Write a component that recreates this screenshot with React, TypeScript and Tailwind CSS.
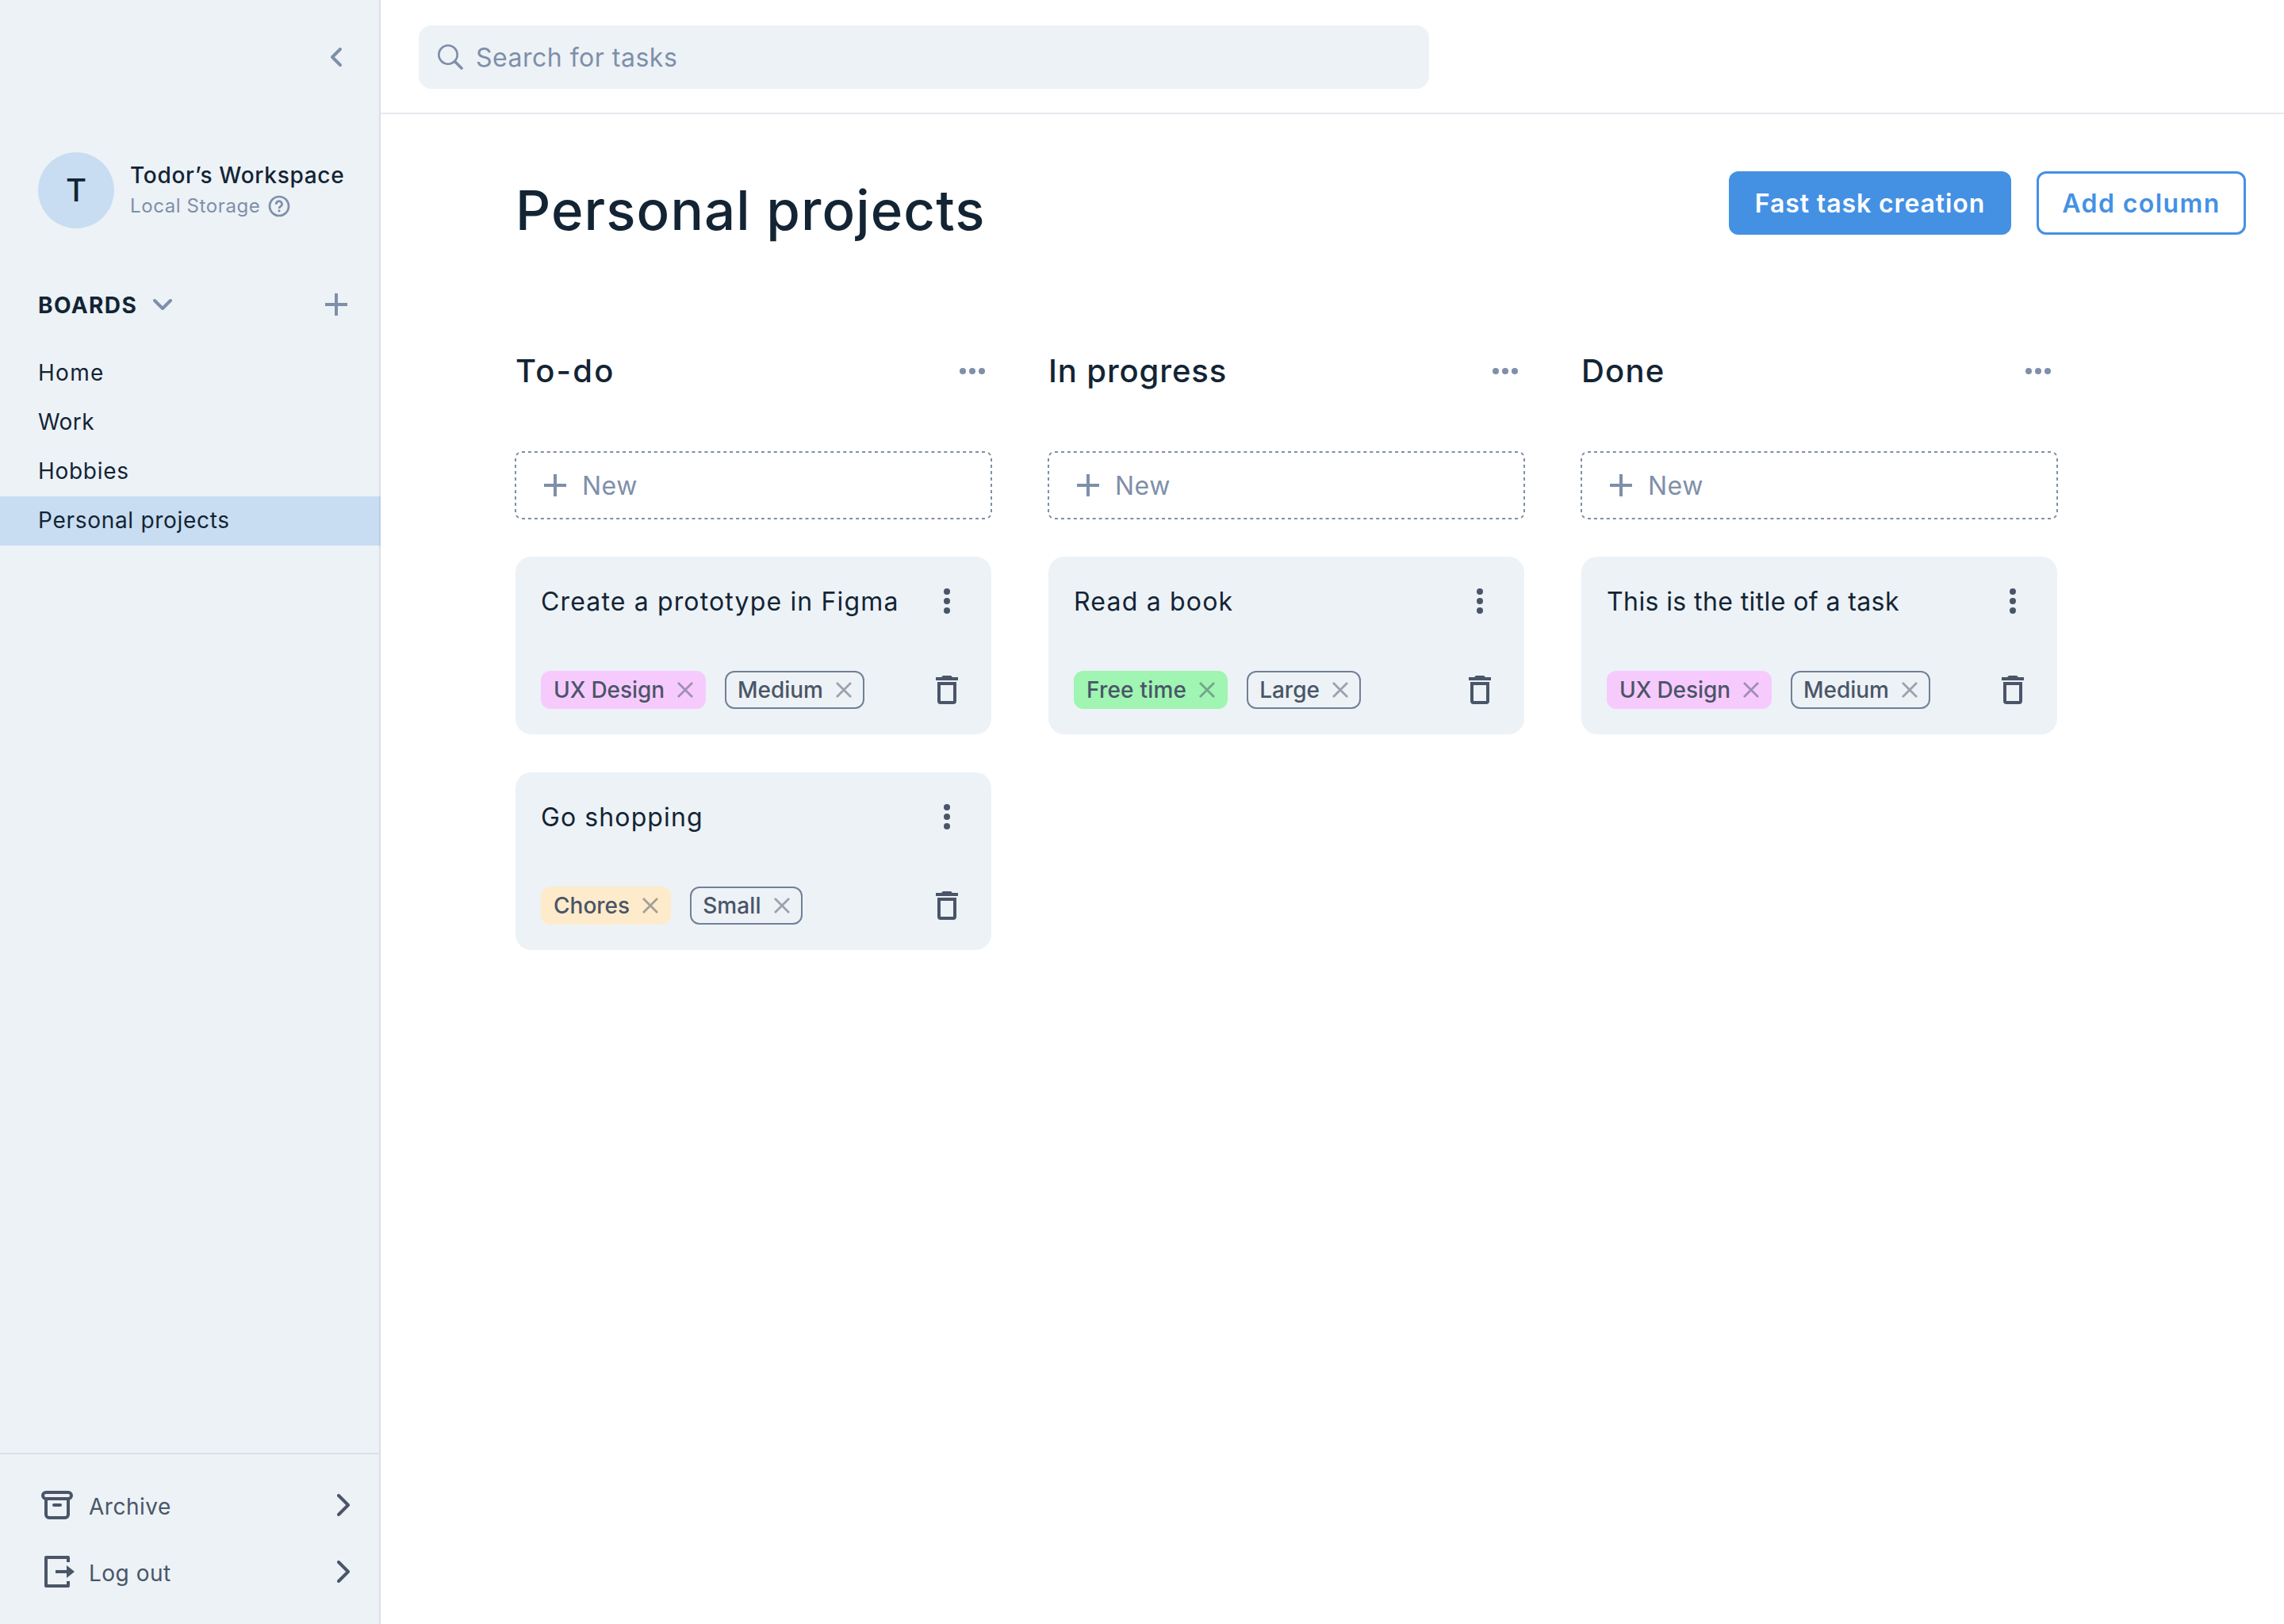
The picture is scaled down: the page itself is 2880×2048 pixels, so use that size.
import React, { useState } from 'react';

interface Tag {
  label: string;
  variant: 'pink' | 'green' | 'orange' | 'outline';
  tracking?: string;
}

interface Task {
  title: string;
  tracking: string;
  tags: Tag[];
}

interface Column {
  name: string;
  tracking: string;
  tasks: Task[];
}

const boards = [
  { name: 'Home', tracking: 'tracking-[1.3px]' },
  { name: 'Work', tracking: 'tracking-[0.4px]' },
  { name: 'Hobbies', tracking: 'tracking-[0.7px]' },
  { name: 'Personal projects', tracking: 'tracking-[0.7px]' },
];

const columns: Column[] = [
  {
    name: 'To-do',
    tracking: 'tracking-[2.2px]',
    tasks: [
      {
        title: 'Create a prototype in Figma',
        tracking: 'tracking-[1.15px]',
        tags: [
          { label: 'UX Design', variant: 'pink', tracking: 'tracking-[-0.1px]' },
          { label: 'Medium', variant: 'outline' },
        ],
      },
      {
        title: 'Go shopping',
        tracking: 'tracking-[1.1px]',
        tags: [
          { label: 'Chores', variant: 'orange' },
          { label: 'Small', variant: 'outline', tracking: 'tracking-[0.1px]' },
        ],
      },
    ],
  },
  {
    name: 'In progress',
    tracking: 'tracking-[0.9px]',
    tasks: [
      {
        title: 'Read a book',
        tracking: 'tracking-[1.2px]',
        tags: [
          { label: 'Free time', variant: 'green', tracking: 'tracking-[0.2px]' },
          { label: 'Large', variant: 'outline' },
        ],
      },
    ],
  },
  {
    name: 'Done',
    tracking: 'tracking-[1.2px]',
    tasks: [
      {
        title: 'This is the title of a task',
        tracking: 'tracking-[0.4px]',
        tags: [
          { label: 'UX Design', variant: 'pink', tracking: 'tracking-[-0.1px]' },
          { label: 'Medium', variant: 'outline' },
        ],
      },
    ],
  },
];

const tagStyles: Record<Tag['variant'], string> = {
  pink: 'border-[#f7cafe] bg-[#f7cafe]',
  green: 'border-[#9ff5b1] bg-[#9ff5b1]',
  orange: 'border-[#feebcb] bg-[#feebcb]',
  outline: 'border-[#718096]',
};

const PlusIcon = () => (
  <svg className="size-7" viewBox="0 0 28 28" fill="none" stroke="currentColor" strokeWidth="4" aria-hidden="true">
    <path d="M14 0v28M0 14h28" />
  </svg>
);

const ChevronRight = () => (
  <svg className="h-7 w-4" viewBox="0 0 16 28" fill="none" stroke="currentColor" strokeWidth="4" strokeLinecap="round" strokeLinejoin="round" aria-hidden="true">
    <path d="M2 2l12 12L2 26" />
  </svg>
);

const ArchiveIcon = () => (
  <svg className="h-9 w-10" viewBox="0 0 40 36" fill="none" stroke="currentColor" strokeWidth="4" strokeLinecap="round" strokeLinejoin="round" aria-hidden="true">
    <rect x="2" y="2" width="36" height="8" rx="4" />
    <path d="M6 10v20a4 4 0 0 0 4 4h20a4 4 0 0 0 4-4V10M16 18h8" />
  </svg>
);

const LogoutIcon = () => (
  <svg className="h-10 w-[38px]" viewBox="0 0 38 40" fill="none" stroke="currentColor" strokeWidth="4" strokeLinejoin="round" aria-hidden="true">
    <path d="M30 8V2H2v36h28v-6M14 20h15" />
    <path d="M28 12l10 8-10 8z" fill="currentColor" stroke="none" />
  </svg>
);

const TrashIcon = () => (
  <svg className="h-9 w-7" viewBox="0 0 28 36" fill="currentColor" aria-hidden="true">
    <path d="M9 0h10l2 2h7v4H0V2h7z" />
    <path fillRule="evenodd" d="M2 8h24v24a4 4 0 0 1-4 4H6a4 4 0 0 1-4-4zm4 4v20h16V12z" />
  </svg>
);

// Dashed outline, each side dashed on its own so the corners stay even
const DashedOutline = () => (
  <svg className="absolute -left-px -top-px h-[86px] w-[602px]" viewBox="0 0 602 86" fill="none" stroke="#7f8fa9" strokeWidth="2" aria-hidden="true">
    <path strokeDasharray="4 3.945" d="M9 1h584M9 85h584" />
    <path strokeDasharray="4 4" d="M1 9v68M601 9v68" />
    <path strokeDasharray="0 4.3 4 4.3" d="M1 9a8 8 0 0 1 8-8M593 1a8 8 0 0 1 8 8M601 77a8 8 0 0 1-8 8M9 85a8 8 0 0 1-8-8" />
  </svg>
);

const TagChip: React.FC<{ tag: Tag }> = ({ tag }) => (
  <span className={`flex h-12 items-center gap-4 rounded-xl border-2 px-3.5 text-[28px] font-medium text-[#4a5568] ${tagStyles[tag.variant]}`}>
    <span className={tag.tracking}>{tag.label}</span>
    <svg className="size-5 opacity-50" viewBox="0 0 20 20" fill="none" stroke="currentColor" strokeWidth="2.8" aria-hidden="true">
      <path d="M1 1l18 18M19 1L1 19" />
    </svg>
  </span>
);

const TaskCard: React.FC<{ task: Task }> = ({ task }) => (
  <article className="flex h-56 flex-col justify-between rounded-[20px] bg-[#ecf2f6] py-8 pl-8 pr-[42px]">
    <div className="flex h-12 items-center justify-between">
      <h3 className={`pt-0.5 text-[32px] text-[#132434] ${task.tracking}`}>{task.title}</h3>
      <button className="flex w-7 justify-center text-[#4a5568]" aria-label="Task menu">
        <svg className="h-8 w-2" viewBox="0 0 8 32" fill="currentColor" aria-hidden="true">
          <circle cx="4" cy="4" r="4" />
          <circle cx="4" cy="16" r="4" />
          <circle cx="4" cy="28" r="4" />
        </svg>
      </button>
    </div>
    <div className="flex items-center justify-between">
      <div className="flex gap-6">
        {task.tags.map((tag) => (
          <TagChip key={tag.label} tag={tag} />
        ))}
      </div>
      <button className="text-[#4a5568]" aria-label="Delete task">
        <TrashIcon />
      </button>
    </div>
  </article>
);

const BoardColumn: React.FC<{ column: Column }> = ({ column }) => (
  <section className="w-[600px]">
    <div className="flex h-[60px] items-center justify-between pr-2">
      <h2 className={`text-[40px] font-medium text-[#132434] ${column.tracking}`}>{column.name}</h2>
      <button className="text-[#7f8fa9]" aria-label="Column menu">
        <svg className="h-2 w-8" viewBox="0 0 32 8" fill="currentColor" aria-hidden="true">
          <circle cx="4" cy="4" r="4" />
          <circle cx="16" cy="4" r="4" />
          <circle cx="28" cy="4" r="4" />
        </svg>
      </button>
    </div>
    <button className="relative mt-[72px] flex h-[84px] w-full items-center gap-5 pl-9 text-[32px] tracking-[0.5px] text-[#7f8fa9]">
      <DashedOutline />
      <PlusIcon />
      <span className="pt-0.5">New</span>
    </button>
    <div className="mt-12 flex flex-col gap-12">
      {column.tasks.map((task) => (
        <TaskCard key={task.title} task={task} />
      ))}
    </div>
  </section>
);

const Sidebar = () => {
  const [active, setActive] = useState('Personal projects');

  return (
    <aside className="flex w-[480px] shrink-0 flex-col bg-[#ecf2f6] shadow-[inset_-2px_0_0_#d9e0e9]">
      <div className="flex h-36 items-center justify-end pr-12">
        <button className="text-[#7f8fa9]" aria-label="Collapse sidebar">
          <svg className="h-7 w-4" viewBox="0 0 16 28" fill="none" stroke="currentColor" strokeWidth="4" strokeLinecap="round" strokeLinejoin="round" aria-hidden="true">
            <path d="M13 4L3 14l10 10" />
          </svg>
        </button>
      </div>

      {/* Workspace */}
      <div className="mt-12 flex h-24 items-center gap-5 pl-12">
        <div className="flex size-24 items-center justify-center rounded-full bg-[#c8ddf2] text-[40px] font-medium text-[#132434]">T</div>
        <div className="pb-0.5">
          <p className="whitespace-nowrap text-[28px] font-medium leading-[42px] tracking-[0.7px] text-[#132434]">Todor’s Workspace</p>
          <p className="flex items-center gap-2.5 text-2xl leading-[36px] tracking-[0.6px] text-[#7f8fa9]">
            Local Storage
            <svg className="size-7" viewBox="0 0 28 28" fill="none" stroke="currentColor" strokeWidth="2.7" aria-hidden="true">
              <circle cx="14" cy="14" r="12" />
              <path d="M10.3 11.8a3.6 3.6 0 1 1 5.7 2.4c-1.3.9-2 1.5-2 2.8" />
              <circle cx="14" cy="19.8" r="1.6" fill="currentColor" stroke="none" />
            </svg>
          </p>
        </div>
      </div>

      {/* Boards */}
      <div className="mt-[75px] flex h-[42px] items-center pl-12 pr-[42px] text-[#7f8fa9]">
        <h2 className="pt-0.5 text-[28px] font-bold tracking-[1.4px] text-[#132434]">BOARDS</h2>
        <svg className="ml-5 h-4 w-6" viewBox="0 0 24 16" fill="none" stroke="currentColor" strokeWidth="4" strokeLinecap="round" strokeLinejoin="round" aria-hidden="true">
          <path d="M2 3l10 10L22 3" />
        </svg>
        <button className="ml-auto" aria-label="Add board">
          <PlusIcon />
        </button>
      </div>
      <nav className="mt-[35px] flex flex-col">
        {boards.map((board) => (
          <button
            key={board.name}
            onClick={() => setActive(board.name)}
            className={`flex h-[62px] items-center pb-0.5 pl-12 text-[28px] text-[#132434] ${board.tracking} ${
              active === board.name ? 'bg-[#c8ddf2] shadow-[inset_-2px_0_0_#bbcfe6]' : ''
            }`}
          >
            {board.name}
          </button>
        ))}
      </nav>

      {/* Footer links */}
      <div className="mt-auto h-[216px] border-t-2 border-[#d9e0e9] pt-[22px] text-[28px] tracking-[0.5px] text-[#4a5568]">
        <button className="flex h-[84px] w-full items-center pl-[52px] pr-[39px]">
          <span className="w-[60px]">
            <ArchiveIcon />
          </span>
          <span className="pt-1">Archive</span>
          <span className="ml-auto">
            <ChevronRight />
          </span>
        </button>
        <button className="flex h-[84px] w-full items-center pl-[52px] pr-[39px]">
          <span className="w-[60px] pl-1">
            <LogoutIcon />
          </span>
          <span className="pt-1">Log out</span>
          <span className="ml-auto">
            <ChevronRight />
          </span>
        </button>
      </div>
    </aside>
  );
};

const App = () => (
  <div className="flex h-[2048px] w-[2880px] bg-white font-['Inter','Open_Sans',sans-serif]">
    <Sidebar />
    <main className="flex-1">
      <header className="flex h-36 items-center border-b-2 border-[#e4eaef] pl-12 pt-0.5">
        <label className="flex h-20 w-[1274px] items-center gap-4 rounded-2xl bg-[#ecf2f6] pl-6 text-[32px] tracking-[0.5px] text-[#7f8fa9]">
          <svg className="size-8" viewBox="0 0 32 32" fill="none" stroke="currentColor" strokeLinecap="round" aria-hidden="true">
            <circle cx="13" cy="13" r="11.7" strokeWidth="2.6" />
            <path d="M21.5 21.5l8.5 8.5" strokeWidth="3.6" />
          </svg>
          <span className="pt-0.5">Search for tasks</span>
        </label>
      </header>

      <div className="flex items-start justify-between pl-[170px] pr-12 pt-[72px]">
        <h1 className="text-[69px] font-medium leading-[98px] tracking-[1.1px] text-[#132434]">Personal projects</h1>
        <div className="flex gap-8">
          <button className="h-20 w-[356px] rounded-xl bg-[#4491e4] pt-0.5 text-[32px] font-semibold tracking-[0.9px] text-white">Fast task creation</button>
          <button className="h-20 w-[264px] rounded-xl border-3 border-[#4491e4] pt-0.5 text-[32px] font-semibold tracking-[1.4px] text-[#4491e4]">Add column</button>
        </div>
      </div>

      <div className="mt-[124px] flex gap-[72px] pl-[170px]">
        {columns.map((column) => (
          <BoardColumn key={column.name} column={column} />
        ))}
      </div>
    </main>
  </div>
);

export default App;
